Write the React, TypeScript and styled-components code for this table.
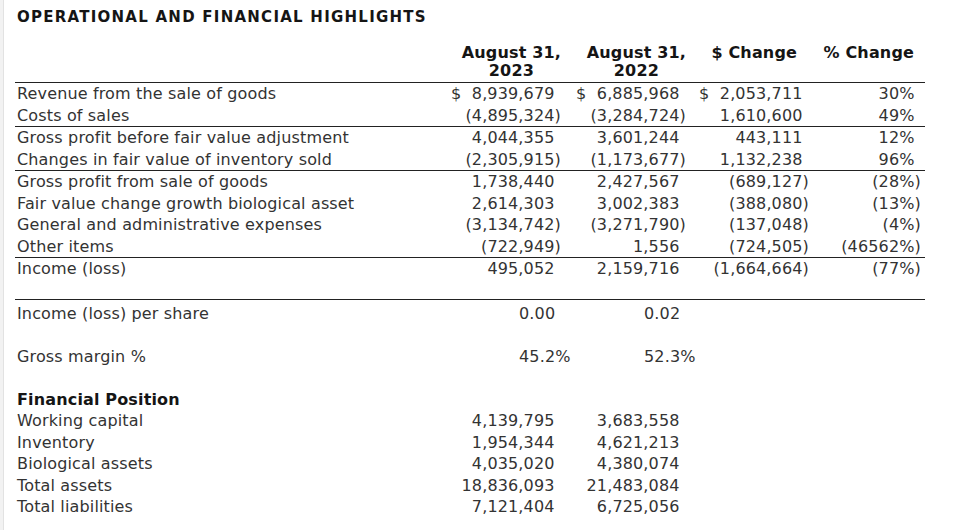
import React from "react";
import styled, { createGlobalStyle } from "styled-components";

const Global = createGlobalStyle`
  html, body { margin: 0; padding: 0; }
  body {
    background: #f2f2f2;
    font-family: "DejaVu Sans", Verdana, sans-serif;
  }
`;

const Page = styled.div`
  margin-left: 3px;
  border-left: 1px solid #e2e2e2;
  background: #ffffff;
  min-height: 530px;
  padding: 7px 0 0 11px;
  box-sizing: border-box;
  color: #333;
  font-size: 16px;
  letter-spacing: 0.15px;
`;

const Title = styled.h1`
  margin: 0 0 17px 2px;
  font-size: 15px;
  line-height: 20px;
  font-weight: bold;
  letter-spacing: 1.25px;
  color: #151515;
`;

const Table = styled.div`
  width: 910px;
`;

const Row = styled.div<{ $rule?: boolean; $head?: boolean }>`
  display: grid;
  grid-template-columns: 430px 114px 125px 123px 112px;
  padding: ${(p) => (p.$head ? "0 4px 2px 2px" : "0 4px 0 2px")};
  line-height: ${(p) => (p.$head ? "18px" : "21.5px")};
  border-bottom: ${(p) => (p.$rule ? "1px solid #222" : "none")};
  min-height: 21.5px;
  white-space: pre;
`;

const Label = styled.div<{ $bold?: boolean }>`
  font-weight: ${(p) => (p.$bold ? "bold" : "normal")};
  color: ${(p) => (p.$bold ? "#151515" : "#333")};
`;

const Num = styled.div<{ $left?: number }>`
  text-align: ${(p) => (p.$left !== undefined ? "left" : "right")};
  padding-left: ${(p) => p.$left ?? 0}px;
`;

const Ghost = styled.span`
  visibility: hidden;
`;

const HeadCell = styled.div<{ $inset?: number }>`
  text-align: right;
  padding-right: ${(p) => p.$inset ?? 0}px;
  align-self: start;
`;

const HeadText = styled.span`
  display: inline-block;
  text-align: center;
  font-weight: bold;
  color: #151515;
`;

const Spacer = styled.div`
  height: 19px;
`;

const Lower = styled.div`
  border-top: 1px solid #222;
  padding-top: 3px;
  width: 910px;
`;

const Value = ({ v }: { v: string }) => (
  <Num>
    {v}
    {!v.endsWith(")") && <Ghost>)</Ghost>}
  </Num>
);

type R = { label: string; v: string[]; rule?: boolean };

const mainRows: R[] = [
  { label: "Revenue from the sale of goods", v: ["$  8,939,679", "$  6,885,968", "$  2,053,711", "30%"] },
  { label: "Costs of sales", v: ["(4,895,324)", "(3,284,724)", "1,610,600", "49%"], rule: true },
  { label: "Gross profit before fair value adjustment", v: ["4,044,355", "3,601,244", "443,111", "12%"] },
  { label: "Changes in fair value of inventory sold", v: ["(2,305,915)", "(1,173,677)", "1,132,238", "96%"], rule: true },
  { label: "Gross profit from sale of goods", v: ["1,738,440", "2,427,567", "(689,127)", "(28%)"] },
  { label: "Fair value change growth biological asset", v: ["2,614,303", "3,002,383", "(388,080)", "(13%)"] },
  { label: "General and administrative expenses", v: ["(3,134,742)", "(3,271,790)", "(137,048)", "(4%)"] },
  { label: "Other items", v: ["(722,949)", "1,556", "(724,505)", "(46562%)"], rule: true },
  { label: "Income (loss)", v: ["495,052", "2,159,716", "(1,664,664)", "(77%)"] },
];

const positionRows: R[] = [
  { label: "Working capital", v: ["4,139,795", "3,683,558"] },
  { label: "Inventory", v: ["1,954,344", "4,621,213"] },
  { label: "Biological assets", v: ["4,035,020", "4,380,074"] },
  { label: "Total assets", v: ["18,836,093", "21,483,084"] },
  { label: "Total liabilities", v: ["7,121,404", "6,725,056"] },
];

export default function App() {
  return (
    <>
      <Global />
      <Page>
        <Title>OPERATIONAL AND FINANCIAL HIGHLIGHTS</Title>
        <Table>
          <Row $head $rule>
            <div />
            <HeadCell>
              <HeadText>
                August 31,
                <br />
                2023
              </HeadText>
            </HeadCell>
            <HeadCell>
              <HeadText>
                August 31,
                <br />
                2022
              </HeadText>
            </HeadCell>
            <HeadCell $inset={12}>
              <HeadText>$ Change</HeadText>
            </HeadCell>
            <HeadCell $inset={7}>
              <HeadText>% Change</HeadText>
            </HeadCell>
          </Row>
          {mainRows.map((r) => (
            <Row key={r.label} $rule={r.rule}>
              <Label>{r.label}</Label>
              {r.v.map((v, i) => (
                <Value key={i} v={v} />
              ))}
            </Row>
          ))}
        </Table>
        <Spacer />
        <Lower>
          <Row>
            <Label>Income (loss) per share</Label>
            <Num $left={72}>0.00</Num>
            <Num $left={83}>0.02</Num>
          </Row>
          <Row />
          <Row>
            <Label>Gross margin %</Label>
            <Num $left={72}>45.2%</Num>
            <Num $left={83}>52.3%</Num>
          </Row>
          <Row />
          <Row>
            <Label $bold>Financial Position</Label>
          </Row>
          {positionRows.map((r) => (
            <Row key={r.label}>
              <Label>{r.label}</Label>
              {r.v.map((v, i) => (
                <Value key={i} v={v} />
              ))}
            </Row>
          ))}
        </Lower>
      </Page>
    </>
  );
}
